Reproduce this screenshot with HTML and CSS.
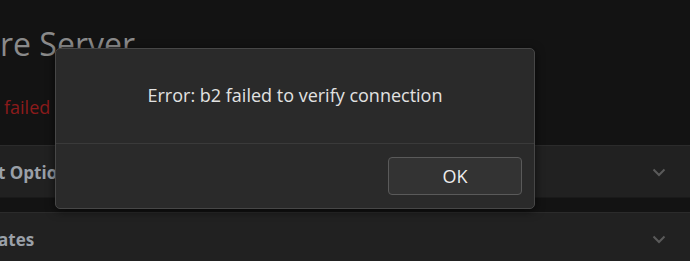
FILE: index.html
```html
<!DOCTYPE html>
<html>
<head>
<meta charset="utf-8">
<link rel="stylesheet" href="styles.css">
</head>
<body>
<div class="page">
  <h1 class="title">re Server</h1>
  <p class="status">failed</p>
  <div class="panels">
    <div class="panel">
      <span class="panel-label">t Options</span>
      <svg class="chev" width="14" height="9" viewBox="0 0 14 9"><path d="M1.5 1.5 L7 7 L12.5 1.5" fill="none" stroke="#5a5a5a" stroke-width="2"/></svg>
    </div>
    <div class="panel">
      <span class="panel-label">ates</span>
      <svg class="chev" width="14" height="9" viewBox="0 0 14 9"><path d="M1.5 1.5 L7 7 L12.5 1.5" fill="none" stroke="#5a5a5a" stroke-width="2"/></svg>
    </div>
  </div>
</div>
<div class="dialog">
  <div class="dialog-body">Error: b2 failed to verify connection</div>
  <div class="dialog-foot">
    <button class="btn">OK</button>
  </div>
</div>
</body>
</html>
```
FILE: styles.css
```css
html, body {
  margin: 0;
  padding: 0;
}
body {
  width: 690px;
  height: 261px;
  overflow: hidden;
  background: #131313;
  font-family: "Open Sans", "Noto Sans", sans-serif;
  position: relative;
}
.page {
  display: flex;
  flex-direction: column;
}
.title {
  margin: 22px 0 0 0;
  font-size: 32px;
  line-height: 44px;
  font-weight: 400;
  color: #8a8a8a;
}
.status {
  margin: 29px 0 0 4px;
  font-size: 18px;
  line-height: 24px;
  color: #8c1b1b;
}
.panels {
  margin-top: 26px;
  display: flex;
  flex-direction: column;
  gap: 14px;
}
.panel {
  height: 50px;
  background: #212121;
  border-top: 1px solid #2b2b2b;
  border-bottom: 1px solid #1a1a1a;
  display: flex;
  align-items: center;
  justify-content: space-between;
  padding: 1px 24px 0 0;
}
.panel-label {
  font-size: 17px;
  font-weight: 700;
  color: #9aa0a8;
  margin-left: -2px;
}
.chev {
  display: block;
}
.dialog {
  position: absolute;
  left: 55px;
  top: 48px;
  width: 478px;
  height: 159px;
  background: #2a2a2a;
  border: 1px solid #474747;
  border-radius: 5px;
  box-shadow: 0 2px 10px rgba(0,0,0,0.6);
  display: flex;
  flex-direction: column;
}
.dialog-body {
  height: 92px;
  padding-bottom: 2px;
  display: flex;
  align-items: center;
  justify-content: center;
  font-size: 18px;
  color: #e2e2e2;
  border-bottom: 1px solid #3a3a3a;
}
.dialog-foot {
  flex: 1;
  display: flex;
  justify-content: flex-end;
  align-items: center;
  padding-right: 12px;
}
.btn {
  width: 134px;
  height: 38px;
  background: #333333;
  border: 1px solid #5a5a5a;
  border-radius: 4px;
  color: #ececec;
  font-family: "Open Sans", "Noto Sans", sans-serif;
  font-size: 18px;
  padding: 0;
}
```
